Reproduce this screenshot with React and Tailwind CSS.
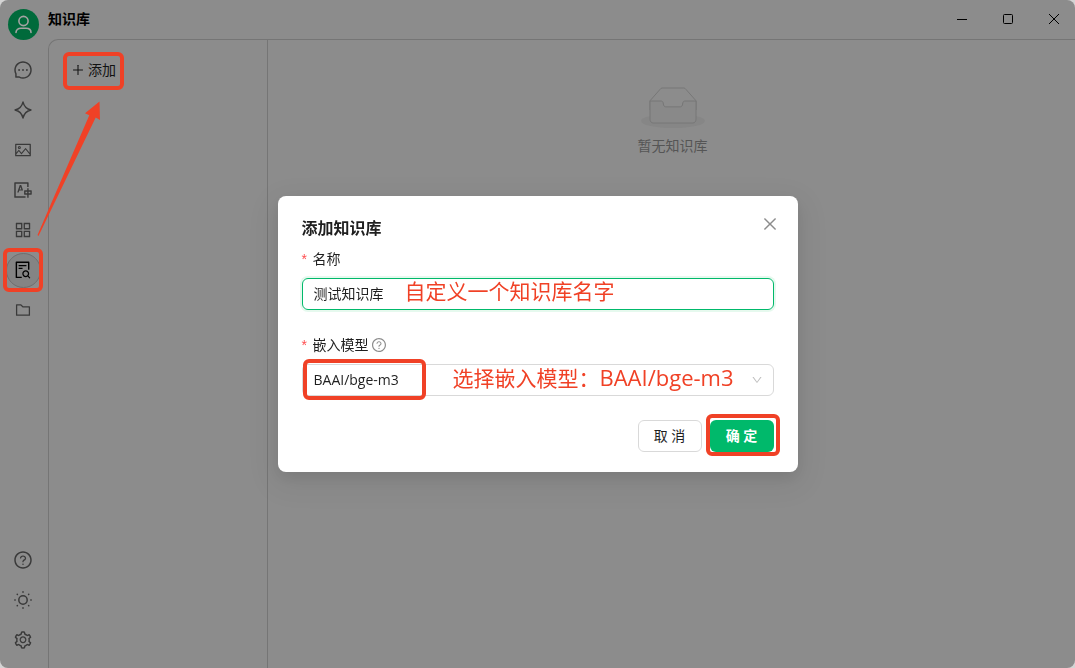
import { useState } from 'react';
import {
    AiOutlineAppstore,
    AiOutlineClose,
    AiOutlineDown,
    AiOutlineFileSearch,
    AiOutlineFolder,
    AiOutlineMessage,
    AiOutlinePicture,
    AiOutlinePlus,
    AiOutlineQuestionCircle,
    AiOutlineSetting,
    AiOutlineTranslation,
} from 'react-icons/ai';

const SparkleIcon = ({ size = 18 }) => (
    <svg width={size} height={size} viewBox="0 0 18 18" fill="none" stroke="currentColor" strokeWidth="1.3" strokeLinejoin="round">
        <path d="M9 1C10 5.2 12.4 8 17 9C12.4 10 10 12.8 9 17C8 12.8 5.6 10 1 9C5.6 8 8 5.2 9 1Z" />
    </svg>
);

const SunIcon = ({ size = 18 }) => (
    <svg width={size} height={size} viewBox="0 0 18 18" fill="none" stroke="currentColor" strokeWidth="1.5" strokeLinecap="round">
        <circle cx="9" cy="9" r="4.2" />
        <path d="M9 0.8V1.2M9 16.8V17.2M0.8 9H1.2M16.8 9H17.2M3.2 3.2L3.4 3.4M14.6 14.6L14.8 14.8M3.2 14.8L3.4 14.6M14.6 3.4L14.8 3.2" />
    </svg>
);

const UserIcon = () => (
    <svg width="19" height="19" viewBox="0 0 19 19" fill="none" stroke="currentColor" strokeWidth="1.6" strokeLinecap="round">
        <circle cx="9.5" cy="6" r="4.6" />
        <path d="M2 17.5C2 14.6 4.2 13.2 7 13.2H12C14.8 13.2 17 14.6 17 17.5" />
    </svg>
);

const EmptyIcon = () => (
    <svg width="64" height="41" viewBox="0 0 64 41">
        <g transform="translate(0 1)" fillRule="evenodd">
            <ellipse fill="#868686" cx="32" cy="33" rx="32" ry="7" />
            <g fillRule="nonzero" stroke="#777777">
                <path fill="none" d="M55 12.76L44.854 1.258C44.367.474 43.656 0 42.907 0H21.093c-.749 0-1.46.474-1.947 1.257L9 12.761V22h46v-9.24z" />
                <path fill="#898989" d="M41.613 15.931c0-1.605.994-2.93 2.227-2.931H55v18.137C55 33.26 53.68 35 52.05 35h-40.1C10.32 35 9 33.259 9 31.137V13h11.16c1.233 0 2.227 1.323 2.227 2.928v.022c0 1.605 1.005 2.901 2.237 2.901h14.752c1.232 0 2.237-1.308 2.237-2.913v-.007z" />
            </g>
        </g>
    </svg>
);

const mainMenu = [
    { id: 'chat', label: '聊天', icon: AiOutlineMessage, size: 20 },
    { id: 'agents', label: '智能体', icon: SparkleIcon, size: 18 },
    { id: 'paintings', label: '绘画', icon: AiOutlinePicture, size: 18 },
    { id: 'translate', label: '翻译', icon: AiOutlineTranslation, size: 20 },
    { id: 'apps', label: '小程序', icon: AiOutlineAppstore, size: 20 },
    { id: 'knowledge', label: '知识库', icon: AiOutlineFileSearch, size: 20 },
    { id: 'files', label: '文件', icon: AiOutlineFolder, size: 18 },
];

const bottomMenu = [
    { id: 'help', label: '帮助', icon: AiOutlineQuestionCircle, size: 20 },
    { id: 'theme', label: '主题', icon: SunIcon, size: 18 },
    { id: 'settings', label: '设置', icon: AiOutlineSetting, size: 20 },
];

// Red frame drawn round the element it is placed in
const Mark = ({ className }) => (
    <span className={`pointer-events-none absolute rounded-md border-4 border-[#f04126] ${className}`} />
);

const MenuItem = ({ item }) => {
    const Icon = item.icon;
    const active = item.id === 'knowledge';

    return (
        <div className="relative flex h-10 w-10 items-center justify-center">
            <button
                type="button"
                aria-label={item.label}
                className={`flex h-[35px] w-[35px] items-center justify-center rounded-full ${active ? 'border border-[#6f6f6f] bg-[#848484] text-black' : 'text-[#3a3a3a]'}`}
            >
                <Icon size={item.size} />
            </button>
            {active && <Mark className="inset-x-0 -inset-y-0.5" />}
        </div>
    );
};

const Sidebar = () => (
    <aside className="flex w-12 shrink-0 flex-col items-center pt-[9px] pr-0.5 pb-2">
        <div className="mb-2.5 flex h-[31px] w-[31px] items-center justify-center rounded-full bg-[#006a3b] text-[#a3a3a3]">
            <UserIcon />
        </div>
        <nav className="flex grow flex-col">
            {mainMenu.map((item) => (
                <MenuItem key={item.id} item={item} />
            ))}
        </nav>
        <div className="flex flex-col">
            {bottomMenu.map((item) => (
                <MenuItem key={item.id} item={item} />
            ))}
        </div>
    </aside>
);

const WindowControls = () => (
    <div className="flex gap-1 text-black">
        <button type="button" aria-label="最小化" className="flex w-[42px] items-center justify-center">
            <svg width="10" height="10" viewBox="0 0 10 10" stroke="currentColor"><path d="M0 5.5H10" /></svg>
        </button>
        <button type="button" aria-label="最大化" className="flex w-[42px] items-center justify-center">
            <svg width="10" height="10" viewBox="0 0 10 10" fill="none" stroke="currentColor"><rect x="0.5" y="0.5" width="9" height="9" rx="1" /></svg>
        </button>
        <button type="button" aria-label="关闭" className="flex w-[42px] items-center justify-center">
            <svg width="10" height="10" viewBox="0 0 10 10" stroke="currentColor"><path d="M0 0L10 10M10 0L0 10" /></svg>
        </button>
    </div>
);

const Required = () => (
    <span className="w-[7px] font-['Liberation_Sans',sans-serif] text-[#ff4d4f]">*</span>
);

const AddKnowledgeModal = () => {
    const [name, setName] = useState('测试知识库');
    const [model, setModel] = useState('BAAI/bge-m3');

    return (
        <div className="fixed inset-0 flex items-center justify-center">
            <form
                role="dialog"
                aria-labelledby="modal-title"
                onSubmit={(e) => e.preventDefault()}
                className="relative w-full max-w-[520px] rounded-lg bg-white px-6 py-5 text-sm leading-[22px] text-[#1f1f1f] shadow-[0_6px_16px_0_rgba(0,0,0,0.08),0_9px_28px_8px_rgba(0,0,0,0.05)]"
            >
                <div className="flex items-start justify-between">
                    <h2 id="modal-title" className="text-base leading-6 font-semibold">添加知识库</h2>
                    <button type="button" aria-label="关闭" className="-mr-2 flex h-4 w-6 items-center justify-center text-[#8c8c8c]">
                        <AiOutlineClose size={18} />
                    </button>
                </div>

                <label htmlFor="name" className="mt-2 flex items-center gap-1">
                    <Required />
                    名称
                </label>
                <div className="relative mt-2">
                    <input
                        id="name"
                        value={name}
                        onChange={(e) => setName(e.target.value)}
                        className="block h-8 w-full rounded-md border border-[#00b96b] px-[11px] pb-0.5 shadow-[0_0_0_2px_rgba(5,200,85,0.1)] outline-none"
                    />
                    <span className="pointer-events-none absolute top-0 left-[103px] text-[21px] leading-[26px] text-[#f04126]">
                        自定义一个知识库名字
                    </span>
                </div>

                <label htmlFor="model" className="mt-6 flex items-center">
                    <Required />
                    <span className="ml-1 mr-0.5">嵌入模型</span>
                    <AiOutlineQuestionCircle size={16} className="text-[#8c8c8c]" />
                </label>
                <div className="relative mt-2">
                    <select
                        id="model"
                        value={model}
                        onChange={(e) => setModel(e.target.value)}
                        className="block h-8 w-full appearance-none rounded-md border border-[#d9d9d9] bg-white px-[11px] outline-none"
                    >
                        <option value="BAAI/bge-m3">BAAI/bge-m3</option>
                    </select>
                    <AiOutlineDown size={12} className="pointer-events-none absolute top-2.5 right-[11px] text-[#bfbfbf]" />
                    <Mark className="-top-[5px] left-px h-[41px] w-[123px]" />
                    <span className="pointer-events-none absolute top-0 left-[151px] text-[21px] leading-[26px] whitespace-nowrap text-[#f04126]">
                        选择嵌入模型：<span className="text-[22px] font-medium">BAAI/bge-m3</span>
                    </span>
                </div>

                <div className="mt-6 flex justify-end gap-2">
                    <button type="button" className="h-8 w-16 rounded-md border border-[#d9d9d9] bg-white">
                        取 消
                    </button>
                    <div className="relative">
                        <button type="submit" className="block h-8 w-16 rounded-md bg-[#00b96b] font-semibold text-white">
                            确 定
                        </button>
                        <Mark className="-top-1.5 -right-1.5 -bottom-1 -left-1" />
                    </div>
                </div>
            </form>
        </div>
    );
};

const App = () => (
    <div className="bg-[#d4d4d4] font-['Open_Sans','Noto_Sans_CJK_SC',sans-serif]">
        <div className="relative flex min-h-screen overflow-hidden rounded-lg bg-[#8c8c8c]">
            <Sidebar />
            <div className="flex min-w-0 grow flex-col">
                <header className="flex h-[39px] items-stretch justify-between pb-0.5">
                    <h1 className="flex items-center text-sm font-bold text-black">知识库</h1>
                    <WindowControls />
                </header>
                <main className="flex grow rounded-tl-[10px] border-t border-l border-[#757575]">
                    <section className="w-[219px] shrink-0 border-r border-[#757575] px-4 pt-3.5">
                        <div className="relative w-fit">
                            <button type="button" className="flex h-8 items-center gap-[3px] px-1.5 text-sm text-[#121212]">
                                <AiOutlinePlus size={14} />
                                添加
                            </button>
                            <Mark className="-inset-x-0.5 -top-0.5 -bottom-1" />
                        </div>
                    </section>
                    <section className="flex grow flex-col items-center gap-[7px] pt-[47px] pl-0.5">
                        <EmptyIcon />
                        <p className="text-sm leading-[22px] text-[#555555]">暂无知识库</p>
                    </section>
                </main>
            </div>
            {/* arrow from the sidebar entry to the add button */}
            <svg className="pointer-events-none absolute top-[100px] left-9" width="70" height="138" viewBox="0 0 70 138">
                <path d="M1.5 135L53.3 15.2L49 13.3L63.5 1.5L64 20L59.7 17.6L2.5 136Z" fill="#f04126" />
            </svg>
        </div>
        <AddKnowledgeModal />
    </div>
);

export default App;
